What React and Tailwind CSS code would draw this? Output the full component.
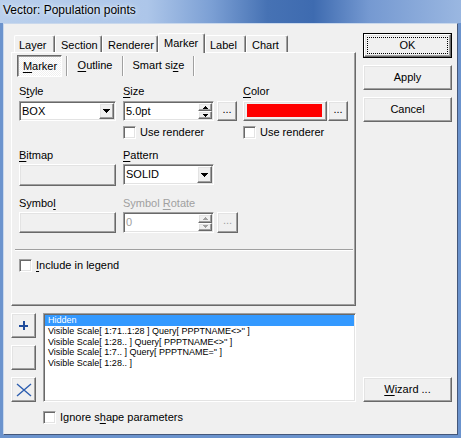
import React from 'react';

// classic 3D borders
const raised =
  'border border-t-white border-l-white border-r-[#696969] border-b-[#696969] shadow-[inset_-1px_-1px_0_#a0a0a0,inset_1px_1px_0_#e3e3e3] bg-[#f0f0f0]';
const sunken =
  'border border-t-[#a0a0a0] border-l-[#a0a0a0] border-r-white border-b-white shadow-[inset_1px_1px_0_#696969,inset_-1px_-1px_0_#e3e3e3]';

const U = ({ children }) => <span className="underline decoration-1 underline-offset-[2px]">{children}</span>;

const Down = ({ color = '#000' }) => (
  <svg width="7" height="4" viewBox="0 0 7 4" shapeRendering="crispEdges">
    <path fill={color} d="M0 0h7v1H0zM1 1h5v1H1zM2 2h3v1H2zM3 3h1v1H3z" />
  </svg>
);

const SmallUp = ({ color = '#000' }) => (
  <svg width="5" height="3" viewBox="0 0 5 3" shapeRendering="crispEdges">
    <path fill={color} d="M2 0h1v1H2zM1 1h3v1H1zM0 2h5v1H0z" />
  </svg>
);

const SmallDown = ({ color = '#000' }) => (
  <svg width="5" height="3" viewBox="0 0 5 3" shapeRendering="crispEdges">
    <path fill={color} d="M0 0h5v1H0zM1 1h3v1H1zM2 2h1v1H2z" />
  </svg>
);

const Button = ({ className = '', children, disabled }) => (
  <div className={`${raised} flex items-center justify-center shrink-0 ${disabled ? 'text-[#a0a0a0]' : 'text-black'} ${className}`}>
    {children}
  </div>
);

const Check = () => <div className={`${sunken} bg-white w-[13px] h-[13px] shrink-0`} />;

const Combo = ({ value, className }) => (
  <div className={`${sunken} bg-white flex p-px shrink-0 ${className}`}>
    <div className="flex-1 flex items-center pl-[1px]">{value}</div>
    <div className={`${raised} w-[15px] flex items-center justify-center`}>
      <Down />
    </div>
  </div>
);

const Spin = ({ value, disabled, className }) => (
  <div className={`${sunken} bg-white flex p-px w-[91px] shrink-0 ${className}`}>
    <div className={`flex-1 flex items-center pl-[1px] ${disabled ? 'text-[#a0a0a0]' : ''}`}>{value}</div>
    <div className="w-[14px] flex flex-col">
      <div className={`${raised} flex-1 flex items-center justify-center`}>
        <SmallUp color={disabled ? '#a0a0a0' : '#000'} />
      </div>
      <div className={`${raised} flex-1 flex items-center justify-center`}>
        <SmallDown color={disabled ? '#a0a0a0' : '#000'} />
      </div>
    </div>
  </div>
);

const Sep = ({ className = '' }) => (
  <div className={`w-[2px] h-[20px] border-l border-l-[#a0a0a0] border-r border-r-white shrink-0 ${className}`} />
);

const tabs = [
  { label: 'Layer', w: 'w-[41px] pl-[4px]' },
  { label: 'Section', w: 'w-[47px] pl-[5px]' },
  { label: 'Renderer', w: 'w-[56px] pl-[5px]' },
  { label: 'Marker', w: 'w-[47px] pl-[5px]', active: true },
  { label: 'Label', w: 'w-[41px] pl-[4px]' },
  { label: 'Chart', w: 'w-[42px] pl-[5px]' },
];

const rules = [
  'Visible Scale[ 1:71..1:28 ] Query[ PPPTNAME<>\'\' ]',
  'Visible Scale[ 1:28.. ] Query[ PPPTNAME<>\'\' ]',
  'Visible Scale[ 1:7.. ] Query[ PPPTNAME=\'\' ]',
  'Visible Scale[ 1:28.. ]',
];

export default function App() {
  return (
    <div className="w-[461px] h-[438px] bg-[#6b93cd] flex flex-col overflow-hidden font-['Liberation_Sans',Arial,sans-serif] text-[11px] leading-[13px] text-black">
      {/* title bar */}
      <div className="h-[23px] shrink-0 pl-[3px] pt-[3px] bg-[linear-gradient(to_right,#b9cfec_0%,#adc6e9_32%,#7b9fd4_46%,#4672b4_58%,#3e6bb0_68%,#7599d1_80%,#9ab7e1_100%)]">
        <span className="text-[12px] leading-[14px] [text-shadow:0_0_6px_#e6f0fb,0_0_3px_#e6f0fb]">Vector: Population points</span>
      </div>

      {/* client area */}
      <div className="flex-1 mx-[3px] mb-[3px] border border-t-[#c9d8ec] border-l-[#c9d8ec] border-r-[#44577a] border-b-[#44577a] bg-[#f0f0f0] flex pt-[9px]">
        {/* left column */}
        <div className="ml-[7px] w-[345px] flex flex-col">
          {/* tab strip */}
          <div className="flex items-end h-[19px] pl-[3px] relative z-10">
            {tabs.map((t) => (
              <div
                key={t.label}
                className={`${t.w} rounded-t-[2px] border-t border-l border-r border-t-white border-l-white border-r-[#696969] shadow-[inset_-1px_0_0_#a0a0a0] bg-[#f0f0f0] ${
                  t.active ? 'h-[20px] -mb-px pt-[3px]' : 'h-[17px] pt-[3px]'
                }`}
              >
                {t.label}
              </div>
            ))}
          </div>

          {/* tab panel */}
          <div className="w-[345px] h-[254px] border border-t-white border-l-white border-r-[#696969] border-b-[#696969] shadow-[inset_-1px_-1px_0_#a0a0a0] flex flex-col">
            {/* sub tabs */}
            <div className="flex items-center mt-[2px] ml-[5px] h-[22px]">
              <div className="w-[45px] h-[22px] border border-t-[#696969] border-l-[#696969] border-r-white border-b-white shadow-[inset_1px_1px_0_#a0a0a0] bg-[repeating-conic-gradient(#ffffff_0_25%,#f0f0f0_0_50%)] bg-[length:2px_2px] flex justify-center pt-[4px] pl-[1px]">
                <span>
                  <U>M</U>arker
                </span>
              </div>
              <Sep className="ml-[4px]" />
              <div className="w-[54px] h-[22px] flex justify-center pt-[4px]">
                <span>
                  <U>O</U>utline
                </span>
              </div>
              <Sep />
              <div className="w-[69px] h-[22px] flex justify-center pt-[4px]">
                <span>
                  Smart si<U>z</U>e
                </span>
              </div>
              <Sep />
            </div>

            <div className="flex flex-col pl-[7px]">
              {/* row A */}
              <div className="flex mt-[8px] h-[13px]">
                <div className="w-[104px]">
                  S<U>t</U>yle
                </div>
                <div className="w-[120px]">
                  <U>S</U>ize
                </div>
                <div>
                  <U>C</U>olor
                </div>
              </div>
              <div className="flex mt-[3px] h-[20px]">
                <Combo value="BOX" className="w-[97px] h-[20px]" />
                <div className="w-[7px]" />
                <Spin value="5.0pt" className="h-[20px]" />
                <Button className="ml-[3px] w-[20px] h-[20px] pb-[4px]">...</Button>
                <div className="w-[6px]" />
                <div className={`${raised} w-[84px] h-[20px] pl-[3px] pt-[2px] shrink-0`}>
                  <div className="w-[75px] h-[13px] bg-[#ff0000]" />
                </div>
                <Button className="ml-[1px] w-[20px] h-[20px] pb-[4px]">...</Button>
              </div>
              <div className="flex mt-[5px] h-[13px]">
                <div className="w-[104px]" />
                <div className="w-[120px] flex items-center gap-[4px]">
                  <Check />
                  <span>Use renderer</span>
                </div>
                <div className="flex items-center gap-[4px]">
                  <Check />
                  <span>Use renderer</span>
                </div>
              </div>

              {/* row B */}
              <div className="flex mt-[10px] h-[13px]">
                <div className="w-[104px]">
                  <U>B</U>itmap
                </div>
                <div>
                  <U>P</U>attern
                </div>
              </div>
              <div className="flex items-start mt-[2px] h-[22px]">
                <Button className="w-[97px] h-[22px]" />
                <div className="w-[7px]" />
                <Combo value="SOLID" className="w-[91px] h-[21px]" />
              </div>

              {/* row C */}
              <div className="flex mt-[11px] h-[13px]">
                <div className="w-[104px]">
                  Symbo<U>l</U>
                </div>
                <div className="text-[#a0a0a0]">
                  Symbol <U>R</U>otate
                </div>
              </div>
              <div className="flex mt-[2px] h-[21px]">
                <Button className="w-[97px] h-[21px]" />
                <div className="w-[7px]" />
                <Spin value="0" disabled className="h-[21px]" />
                <Button disabled className="ml-[3px] w-[21px] h-[21px] pb-[4px]">...</Button>
              </div>
            </div>

            {/* separator */}
            <div className="mt-[16px] ml-[3px] w-[338px] h-[2px] border-t border-t-[#a0a0a0] border-b border-b-white" />

            <div className="flex items-center gap-[4px] mt-[8px] ml-[7px] h-[13px]">
              <Check />
              <span>
                <U>I</U>nclude in legend
              </span>
            </div>
          </div>

          {/* rules list */}
          <div className="flex mt-[7px] h-[89px]">
            <div className="flex flex-col gap-[7px] w-[25px]">
              <Button className="w-[25px] h-[25px]">
                <svg width="9" height="9" viewBox="0 0 9 9" shapeRendering="crispEdges">
                  <path fill="#1f4c9c" d="M3.5 0h2v9h-2zM0 3.5h9v2H0z" />
                </svg>
              </Button>
              <Button className="w-[25px] h-[25px]" />
              <Button className="w-[25px] h-[25px]">
                <svg width="16" height="14" viewBox="0 0 16 14">
                  <path d="M1 1L15 13M15 1L1 13" stroke="#2d5eb0" strokeWidth="1.4" fill="none" />
                </svg>
              </Button>
            </div>
            <div className={`${sunken} bg-white ml-[7px] w-[313px] h-[89px] p-px`}>
              <div className="text-[9px] leading-[10.75px]">
                <div className="bg-[#3399ff] text-white pl-[3px]">Hidden</div>
                {rules.map((r) => (
                  <div key={r} className="pl-[3px]">
                    {r}
                  </div>
                ))}
              </div>
            </div>
          </div>

          <div className="flex items-center gap-[4px] mt-[9px] ml-[32px] h-[13px]">
            <Check />
            <span>
              Ignore s<U>h</U>ape parameters
            </span>
          </div>
        </div>

        {/* right column */}
        <div className="ml-[7px] w-[89px] flex flex-col">
          <div className="w-[89px] h-[25px] border border-black flex">
            <div className={`${raised} flex-1 flex`}>
              <div className="flex-1 m-[2px] border border-dotted border-black flex items-center justify-center">OK</div>
            </div>
          </div>
          <Button className="mt-[7px] w-[89px] h-[25px]">Apply</Button>
          <Button className="mt-[7px] w-[89px] h-[25px]">Cancel</Button>
          <Button className="mt-[255px] w-[89px] h-[25px]">
            <span>
              <U>W</U>izard ...
            </span>
          </Button>
        </div>
      </div>
    </div>
  );
}
